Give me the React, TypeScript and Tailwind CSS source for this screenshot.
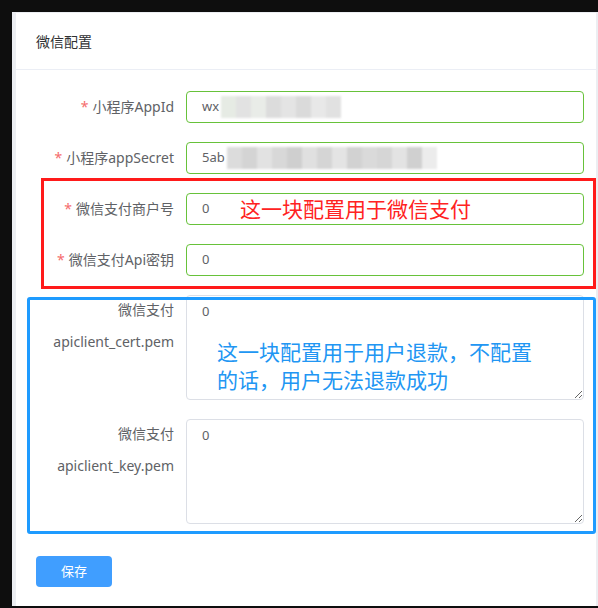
import React from "react";

const font = { fontFamily: '"Noto Sans", "Noto Sans CJK SC", sans-serif' };

const blur1 = ["#e6ebe4", "#e2e2e2", "#e9ece8", "#dcdcdc", "#e4e4e4", "#dadada", "#e8e8e8", "#e1e1e1"];
const blur2 = ["#dcdcdc", "#d4d4d4", "#e2e2e2", "#d8d8d8", "#cfcfcf", "#e0e0e0", "#d5d5d5", "#e4e4e4", "#d2d2d2", "#dadada", "#d6d6d6", "#e3e3e3", "#d0d0d0", "#ececec"];

function Blur({ colors }: { colors: string[] }) {
    return (
        <span className="inline-flex h-[22px] ml-[2px] blur-[0.8px]">
            {colors.map((c, i) => (
                <span key={i} className="inline-block w-[15px] h-full" style={{ backgroundColor: c }} />
            ))}
        </span>
    );
}

function Label({ text, required = true }: { text: string; required?: boolean }) {
    return (
        <div className="w-[170px] shrink-0 pr-3 text-right text-[14px] text-[#606266] leading-8">
            {required && <span className="text-[#f56c6c] mr-1">*</span>}
            {text}
        </div>
    );
}

function Field({ label, children }: { label: string; children: React.ReactNode }) {
    return (
        <div className="flex items-start mb-[19px]">
            <Label text={label} />
            <div className="flex-1 mr-3 h-8 border border-[#67c23a] rounded-[4px] flex items-center px-[15px] text-[13px] text-[#606266]">
                {children}
            </div>
        </div>
    );
}

function AreaField({ lines }: { lines: string[] }) {
    return (
        <div className="flex items-start mb-[19px]">
            <div className="w-[170px] shrink-0 pr-3 text-right text-[14px] text-[#606266] leading-8 -mt-[1px]">
                {lines.map((l) => (
                    <div key={l}>{l}</div>
                ))}
            </div>
            <textarea
                readOnly
                defaultValue="0"
                className="flex-1 mr-3 h-[105px] border border-[#dcdfe6] rounded-[4px] px-[15px] py-[5px] text-[13px] leading-5 text-[#606266] outline-none resize-y"
                style={font}
            />
        </div>
    );
}

export default function App() {
    return (
        <div className="relative h-[608px] bg-[#0e0e0e] pt-3 pl-3 overflow-hidden" style={font}>
            <div className="h-[594px] bg-white border-l-4 border-t border-r-2 border-[#eceef2]">
                <div className="h-[57px] flex items-center pl-5 text-[14px] text-[#303133] border-b border-[#ebeef5]">
                    微信配置
                </div>
                <div className="pt-[21px]">
                    <Field label="小程序AppId">
                        wx<Blur colors={blur1} />
                    </Field>
                    <Field label="小程序appSecret">
                        5ab<Blur colors={blur2} />
                    </Field>
                    <Field label="微信支付商户号">0</Field>
                    <Field label="微信支付Api密钥">0</Field>
                    <AreaField lines={["微信支付", "apiclient_cert.pem"]} />
                    <AreaField lines={["微信支付", "apiclient_key.pem"]} />
                    <div className="pl-5 pt-[13px]">
                        <button className="w-[76px] h-[31px] bg-[#409eff] rounded-[4px] text-white text-[13px]">保存</button>
                    </div>
                </div>
            </div>

            {/* annotations drawn over the form */}
            <div className="absolute left-[41px] top-[178px] w-[555px] h-[111px] border-[3px] border-[#ff1a1a] pointer-events-none" />
            <div className="absolute left-[240px] top-[195px] text-[21px] leading-7 text-[#ff2222] whitespace-nowrap pointer-events-none">
                这一块配置用于微信支付
            </div>
            <div className="absolute left-[27px] top-[297px] w-[569px] h-[237px] border-[3px] border-[#1e9bff] rounded-[3px] pointer-events-none" />
            <div className="absolute left-[217px] top-[338px] w-[330px] text-[21px] leading-7 text-[#2196f3] pointer-events-none">
                这一块配置用于用户退款，不配置的话，用户无法退款成功
            </div>
        </div>
    );
}
